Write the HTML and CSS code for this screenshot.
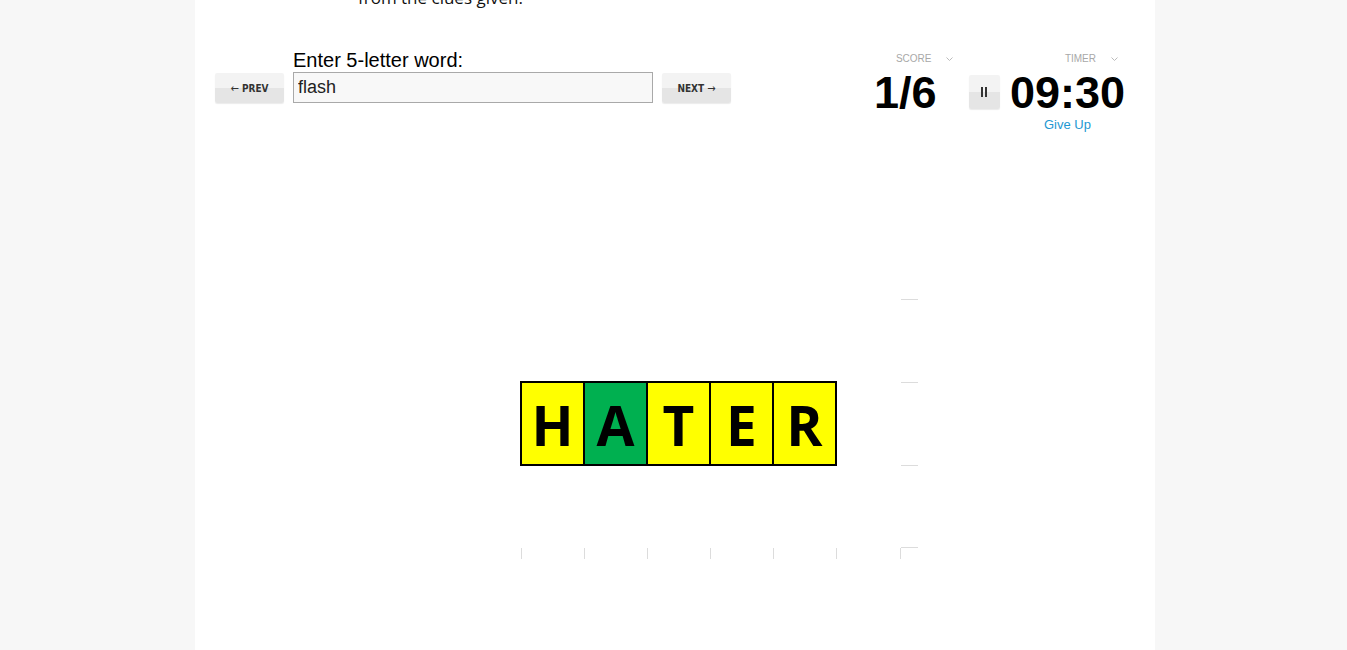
FILE: index.html
```html
<!DOCTYPE html>
<html lang="en">
<head>
<meta charset="utf-8">
<title>Word Game</title>
<link rel="stylesheet" href="styles.css">
</head>
<body>
<div class="page">
  <p class="intro">from the clues given.</p>
  <div class="controls">
    <div class="entry">
      <button class="btn btn-nav"><span class="arrow">&larr;</span> PREV</button>
      <div class="field">
        <label class="field-label" for="word">Enter 5-letter word:</label>
        <input class="field-input" id="word" type="text" value="flash">
      </div>
      <button class="btn btn-nav">NEXT <span class="arrow">&rarr;</span></button>
    </div>
    <div class="stats">
      <div class="stat score">
        <div class="stat-label"><span>SCORE</span><svg class="chev" width="7" height="4" viewBox="0 0 7 4"><polyline points="0.5,0.5 3.5,3.5 6.5,0.5" fill="none" stroke="#bbb" stroke-width="1"/></svg></div>
        <div class="stat-value">1/6</div>
      </div>
      <div class="stat timer">
        <div class="stat-label"><span>TIMER</span><svg class="chev" width="7" height="4" viewBox="0 0 7 4"><polyline points="0.5,0.5 3.5,3.5 6.5,0.5" fill="none" stroke="#bbb" stroke-width="1"/></svg></div>
        <div class="timer-row">
          <button class="btn btn-pause" aria-label="Pause"><span class="bar"></span><span class="bar"></span></button>
          <div class="timer-main">
            <div class="stat-value">09:30</div>
            <a class="give-up" href="#">Give Up</a>
          </div>
        </div>
      </div>
    </div>
  </div>
  <div class="board">
    <div class="tiles">
      <div class="tile yellow">H</div>
      <div class="tile green">A</div>
      <div class="tile yellow">T</div>
      <div class="tile yellow">E</div>
      <div class="tile yellow">R</div>
    </div>
    <span class="tick-h" style="top:0"></span>
    <span class="tick-h" style="top:83px"></span>
    <span class="tick-h" style="top:166px"></span>
    <span class="tick-h" style="top:248px"></span>
    <span class="tick-v" style="left:1px"></span>
    <span class="tick-v" style="left:64px"></span>
    <span class="tick-v" style="left:127px"></span>
    <span class="tick-v" style="left:190px"></span>
    <span class="tick-v" style="left:253px"></span>
    <span class="tick-v" style="left:316px"></span>
    <span class="tick-v" style="left:380px"></span>
  </div>
</div>
</body>
</html>
```

FILE: styles.css
```css
html, body {
  margin: 0;
  padding: 0;
  background: #f7f7f7;
  height: 100%;
  overflow: hidden;
}

body {
  padding-left: 3px;
}

.page {
  display: flow-root;
  width: 960px;
  min-height: 650px;
  margin: 0 auto;
  background: #fff;
  font-family: "Liberation Sans", Arial, sans-serif;
  color: #000;
}

.intro {
  margin: -14px 0 0 0;
  padding-left: 163px;
  font-family: "Open Sans", "Liberation Sans", sans-serif;
  font-size: 17px;
  line-height: 24px;
  color: #111;
}

.controls {
  margin-top: 38px;
  height: 83px;
  padding: 0 30px 0 20px;
  display: flex;
  justify-content: space-between;
  align-items: flex-start;
}

.entry {
  display: flex;
  align-items: flex-end;
  gap: 9px;
}

.field {
  display: flex;
  flex-direction: column;
}

.field-label {
  font-size: 20px;
  line-height: 23px;
  margin-top: 1px;
  margin-bottom: 0;
}

.field-input {
  box-sizing: border-box;
  width: 360px;
  height: 31px;
  margin: 0;
  padding: 0 4px;
  border: 1px solid #a9a9a9;
  background: #f8f8f8;
  font-family: "Liberation Sans", Arial, sans-serif;
  font-size: 18px;
  color: #222;
  outline: none;
}

.btn {
  box-sizing: border-box;
  border: none;
  border-radius: 2px;
  background: linear-gradient(#f3f3f3 0, #f3f3f3 50%, #e5e5e5 50%, #e5e5e5 100%);
  box-shadow: 0 1px 1px rgba(0, 0, 0, 0.08);
  padding: 0;
  margin: 0;
  cursor: pointer;
}

.btn-nav {
  width: 69px;
  height: 30px;
  font-family: "DejaVu Sans Condensed", "Liberation Sans Narrow", "Liberation Sans", sans-serif;
  font-stretch: condensed;
  font-weight: bold;
  font-size: 10px;
  color: #333;
  letter-spacing: 0;
}

.arrow {
  font-weight: normal;
  font-size: 11px;
}

.stats {
  display: flex;
  margin-top: 5px;
  gap: 14px;
}

.stat-label {
  height: 12px;
  font-size: 10px;
  line-height: 12px;
  color: #a8a8a8;
  display: flex;
  align-items: center;
}

.chev {
  display: block;
}

.score .stat-label {
  padding-left: 22px;
}

.score .chev {
  margin-left: 15px;
}

.timer .stat-label {
  padding-left: 96px;
}

.timer .chev {
  margin-left: 15px;
}

.stat-value {
  margin-top: 5px;
  font-size: 45px;
  line-height: 45px;
  font-weight: bold;
  letter-spacing: 0;
}

.score {
  width: 81px;
}

.timer-row {
  display: flex;
  align-items: flex-start;
  gap: 10px;
}

.btn-pause {
  width: 31px;
  height: 34px;
  margin-top: 10px;
  display: flex;
  justify-content: center;
  align-items: center;
  gap: 2px;
}

.bar {
  display: block;
  width: 2px;
  height: 10px;
  background: #333;
}

.timer-main {
  display: flex;
  flex-direction: column;
  align-items: center;
}

.give-up {
  margin-top: 2px;
  font-size: 13px;
  line-height: 15px;
  color: #1e98d2;
  text-decoration: none;
}

.board {
  position: relative;
  margin: 168px 0 0 325px;
  width: 400px;
  height: 260px;
}

.tiles {
  position: absolute;
  top: 82px;
  left: 0;
  display: flex;
  border: 2px solid #000;
  background: #000;
  gap: 2px;
}

.tile {
  width: 61px;
  height: 80px;
  display: flex;
  justify-content: center;
  align-items: center;
  padding-top: 1px;
  font-family: "Open Sans", "Liberation Sans", sans-serif;
  font-weight: 700;
  font-size: 55px;
  line-height: 1;
  color: #000;
}

.yellow {
  background: #ffff00;
}

.green {
  background: #00b050;
}

.tick-h {
  position: absolute;
  left: 381px;
  width: 17px;
  height: 1px;
  background: #dcdcdc;
}

.tick-v {
  position: absolute;
  top: 249px;
  width: 1px;
  height: 11px;
  background: #dcdcdc;
}
```
